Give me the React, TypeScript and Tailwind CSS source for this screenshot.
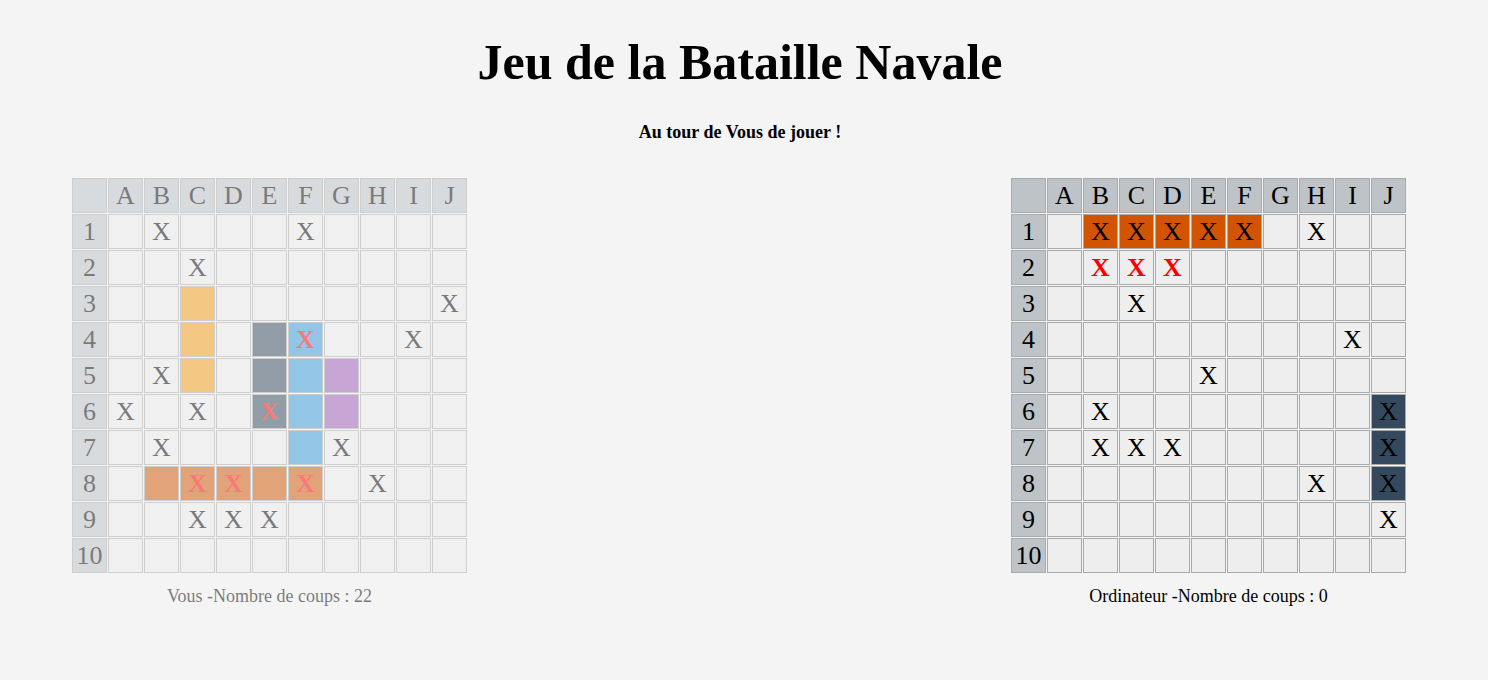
import React from 'react';

type Cell = { bg?: string; mark?: 'miss' | 'hit' | 'sunk' };

const COLS = ['A', 'B', 'C', 'D', 'E', 'F', 'G', 'H', 'I', 'J'];

const SHIP_BG: Record<string, string> = {
  orange: 'bg-[#f39c12]',
  grey: 'bg-[#34495e]',
  blue: 'bg-[#3498db]',
  purple: 'bg-[#9b59b6]',
  pumpkin: 'bg-[#d35400]',
  dark: 'bg-[#34495e]',
};

// build a 10x10 board from a compact description: "C3:orange" etc.
const buildBoard = (ships: Record<string, string>, misses: string[], hits: string[], sunk: string[] = []) => {
  const board: Cell[][] = Array.from({ length: 10 }, () => Array.from({ length: 10 }, () => ({} as Cell)));
  const pos = (key: string) => {
    const c = COLS.indexOf(key[0]);
    const r = parseInt(key.slice(1), 10) - 1;
    return [r, c];
  };
  Object.entries(ships).forEach(([k, color]) => {
    const [r, c] = pos(k);
    board[r][c].bg = SHIP_BG[color];
  });
  misses.forEach((k) => { const [r, c] = pos(k); board[r][c].mark = 'miss'; });
  hits.forEach((k) => { const [r, c] = pos(k); board[r][c].mark = 'hit'; });
  sunk.forEach((k) => { const [r, c] = pos(k); board[r][c].mark = 'sunk'; });
  return board;
};

const playerBoard = buildBoard(
  {
    C3: 'orange', C4: 'orange', C5: 'orange',
    E4: 'grey', E5: 'grey', E6: 'grey',
    F4: 'blue', F5: 'blue', F6: 'blue', F7: 'blue',
    G5: 'purple', G6: 'purple',
    B8: 'pumpkin', C8: 'pumpkin', D8: 'pumpkin', E8: 'pumpkin', F8: 'pumpkin',
  },
  ['B1', 'F1', 'C2', 'J3', 'I4', 'B5', 'A6', 'C6', 'B7', 'G7', 'H8', 'C9', 'D9', 'E9'],
  ['F4', 'E6', 'C8', 'D8', 'F8']
);

const computerBoard = buildBoard(
  {
    B1: 'pumpkin', C1: 'pumpkin', D1: 'pumpkin', E1: 'pumpkin', F1: 'pumpkin',
    J6: 'dark', J7: 'dark', J8: 'dark',
  },
  ['H1', 'C3', 'I4', 'E5', 'B6', 'B7', 'C7', 'D7', 'H8', 'J9'],
  ['B2', 'C2', 'D2'],
  ['B1', 'C1', 'D1', 'E1', 'F1', 'J6', 'J7', 'J8']
);

const Board: React.FC<{ board: Cell[][]; faded?: boolean; label: string }> = ({ board, faded, label }) => (
  <div className={`flex flex-col items-center ${faded ? 'opacity-50' : ''}`}>
    <div className="grid grid-cols-[repeat(11,35px)] auto-rows-[35px] gap-[1px] text-[26px] leading-none text-black">
      <div className="bg-[#bdc3c7] border border-[#aaaaaa]" />
      {COLS.map((c) => (
        <div key={c} className="bg-[#bdc3c7] border border-[#aaaaaa] flex items-center justify-center">{c}</div>
      ))}
      {board.map((row, r) => (
        <React.Fragment key={r}>
          <div className="bg-[#bdc3c7] border border-[#aaaaaa] flex items-center justify-center">{r + 1}</div>
          {row.map((cell, c) => (
            <div
              key={c}
              className={`border border-[#aaaaaa] flex items-center justify-center ${cell.bg ?? 'bg-[#eeeeee]'} ${
                cell.mark === 'hit' ? 'text-[#ff0000] font-bold' : ''
              }`}
            >
              {cell.mark ? 'X' : ''}
            </div>
          ))}
        </React.Fragment>
      ))}
    </div>
    <p className="mt-[12px] text-[18px] leading-[22px] text-black">{label}</p>
  </div>
);

export default function App() {
  return (
    <div className="min-h-[680px] bg-[#f4f4f4] font-['Liberation_Serif','Times_New_Roman',serif] text-black">
      <h1 className="pt-[33px] pr-[8px] text-center text-[50px] leading-[58px] font-bold">Jeu de la Bataille Navale</h1>
      <p className="mt-[30px] pr-[8px] text-center text-[18px] leading-[22px] font-bold">Au tour de Vous de jouer !</p>
      <div className="mt-[35px] flex justify-between pl-[72px] pr-[82px]">
        <Board board={playerBoard} faded label="Vous -Nombre de coups : 22" />
        <Board board={computerBoard} label="Ordinateur -Nombre de coups : 0" />
      </div>
    </div>
  );
}
